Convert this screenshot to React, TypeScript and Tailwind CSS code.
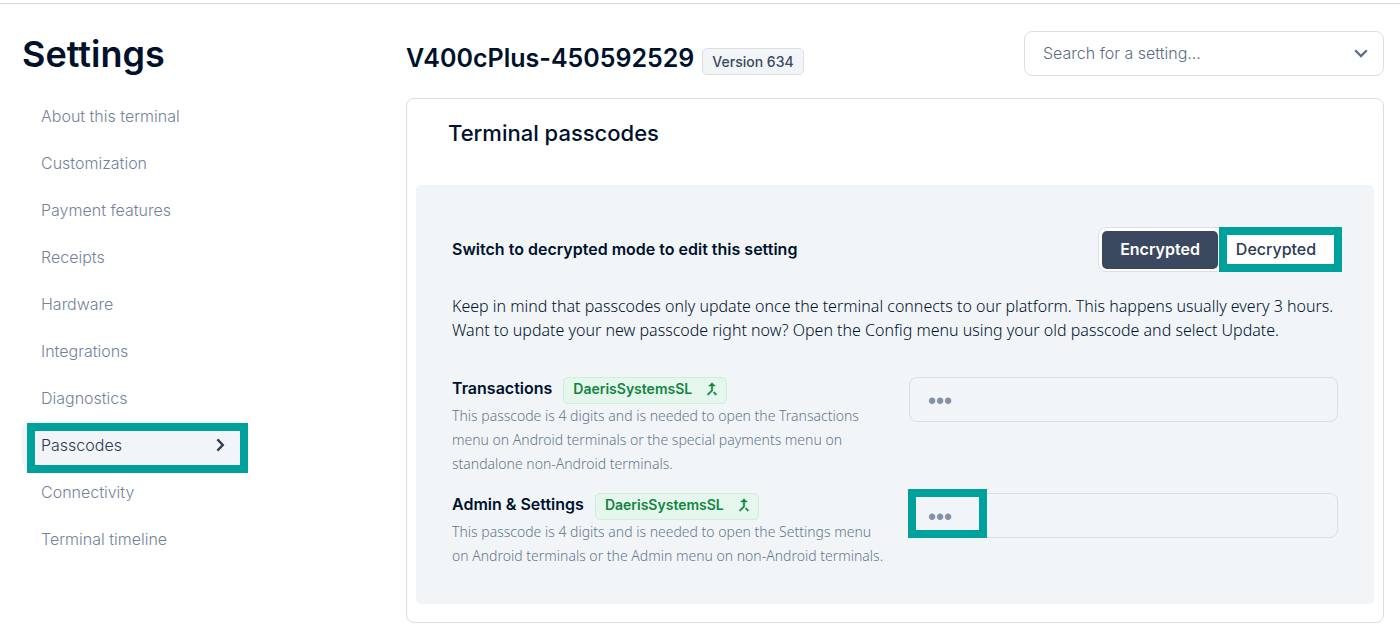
import React from "react";

const NAV_ITEMS = [
  "About this terminal",
  "Customization",
  "Payment features",
  "Receipts",
  "Hardware",
  "Integrations",
  "Diagnostics",
  "Passcodes",
  "Connectivity",
  "Terminal timeline",
];

const ACTIVE_ITEM = "Passcodes";

function Highlight({ className }: { className: string }) {
  return (
    <span
      aria-hidden="true"
      className={`pointer-events-none absolute border-8 border-[#00a19c] ${className}`}
    />
  );
}

function Chevron({ className, d }: { className: string; d: string }) {
  return (
    <svg
      aria-hidden="true"
      viewBox="0 0 16 16"
      className={className}
      fill="none"
      stroke="currentColor"
      strokeWidth="2.3"
    >
      <path d={d} />
    </svg>
  );
}

function MergeIcon() {
  return (
    <svg
      aria-hidden="true"
      viewBox="0 0 24 24"
      className="size-[18px]"
      fill="currentColor"
      stroke="currentColor"
      strokeWidth="0.6"
    >
      <path d="M17 20.41 18.41 19 15 15.59 13.59 17 17 20.41zM7.5 8H11v5.59L5.59 19 7 20.41l6-6V8h3.5L12 3.5 7.5 8z" />
    </svg>
  );
}

function Sidebar() {
  return (
    <aside className="w-[406px] shrink-0 pl-[22px] pt-[26px]">
      <h1 className="text-[36px] font-semibold leading-[48px]">Settings</h1>
      <nav aria-label="Settings" className="mt-[14px] w-[222px]">
        <ul>
          {NAV_ITEMS.map((item) => {
            const active = item === ACTIVE_ITEM;
            return (
              <li key={item} className="relative">
                <a
                  href="#"
                  aria-current={active ? "page" : undefined}
                  className={`flex h-[47px] items-center justify-between rounded-lg pl-[19px] pr-4 text-base font-light ${
                    active ? "bg-[#f1f5f8] text-[#2c3a54]" : "text-[#75839a]"
                  }`}
                >
                  {item}
                  {active && (
                    <Chevron className="size-4" d="M5.4 2.4 10.8 8l-5.4 5.6" />
                  )}
                </a>
                {active && (
                  <Highlight className="-right-1 left-[5px] top-0.5 h-[50px]" />
                )}
              </li>
            );
          })}
        </ul>
      </nav>
    </aside>
  );
}

function PasscodeRow({
  id,
  label,
  description,
  highlighted = false,
}: {
  id: string;
  label: string;
  description: string;
  highlighted?: boolean;
}) {
  return (
    <>
      <div>
        <div className="flex h-[27px] items-center gap-[11px]">
          <label htmlFor={id} className="pb-1.5 text-base font-semibold leading-6">
            {label}
          </label>
          <span className="flex h-[27px] items-center gap-[11px] rounded-[5px] border border-[#cdeedb] bg-[#e5f7ec] pb-[3px] pl-[9px] pr-[5px] text-sm font-semibold text-[#128442]">
            DaerisSystemsSL
            <MergeIcon />
          </span>
        </div>
        <p className="-mr-1.5 font-['Noto_Sans',sans-serif] text-sm font-light leading-6 text-[#66758c]">
          {description}
        </p>
      </div>
      <div className="relative h-[45px]">
        <input
          id={id}
          type="text"
          readOnly
          defaultValue="•••"
          className="h-full w-full rounded-lg border border-[#d9dee4] bg-transparent px-[18px] pt-1 font-['Liberation_Sans',sans-serif] text-[23px] leading-6 text-[#8390a5] outline-none"
        />
        {highlighted && (
          <Highlight className="-left-px -top-1 h-[49px] w-[79px]" />
        )}
      </div>
    </>
  );
}

export default function App() {
  return (
    <div className="bg-white font-['Inter','Liberation_Sans',sans-serif] text-[#00112c]">
      <div className="h-1 border-b border-[#d0d7df]" />
      <div className="flex">
        <Sidebar />
        <main className="min-w-0 flex-1 pb-[10px] pr-4 pt-[27px]">
          <header className="flex items-start justify-between">
            <div className="flex items-center gap-2 pt-[9px]">
              <h2 className="text-[25px] font-semibold leading-9">
                V400cPlus-450592529
              </h2>
              <span className="mt-[7px] flex h-[27px] items-center rounded-[5px] border border-[#dbdee2] bg-[#f1f5f8] px-[9px] text-sm font-medium text-[#3a4860]">
                Version 634
              </span>
            </div>
            <div className="relative w-[360px]">
              <select
                aria-label="Search for a setting"
                className="block h-[45px] w-full appearance-none rounded-lg border border-[#dbdee6] bg-white px-[18px] pb-0.5 text-base font-light text-[#5d6c84] outline-none"
              >
                <option>Search for a setting...</option>
              </select>
              <Chevron
                className="pointer-events-none absolute right-[15px] top-[14px] size-4 text-[#5d6f88]"
                d="M2.2 5.2 8 11l5.8-5.8"
              />
            </div>
          </header>

          <section className="mt-[22px] rounded-lg border border-[#dbdee6] px-[9px] pb-[18px]">
            <h3 className="px-8 pb-[38px] pt-5 text-[22px] font-medium leading-7">
              Terminal passcodes
            </h3>
            <div className="rounded-[5px] bg-[#f1f5f8] px-9 pb-9 pt-[42px]">
              <div className="flex items-center justify-between">
                <h4 className="pb-0.5 text-base font-semibold">
                  Switch to decrypted mode to edit this setting
                </h4>
                <div className="relative flex h-[45px] w-[240px] items-center rounded-lg border border-[#dbdee2] bg-white p-[3px]">
                  <button
                    type="button"
                    aria-pressed="true"
                    className="h-[38px] w-[116px] rounded-[5px] bg-[#3a4860] pb-0.5 text-base font-semibold text-white"
                  >
                    Encrypted
                  </button>
                  <button
                    type="button"
                    aria-pressed="false"
                    className="h-[38px] flex-1 rounded-[5px] pb-0.5 text-base font-medium text-[#2c3a54]"
                  >
                    Decrypted
                  </button>
                  <Highlight className="-right-[5px] -top-px h-[45px] w-[123px]" />
                </div>
              </div>

              <p className="mt-[22px] font-['Noto_Sans',sans-serif] text-base font-light leading-6">
                Keep in mind that passcodes only update once the terminal
                connects to our platform. This happens usually every 3 hours.
                Want to update your new passcode right now? Open the Config menu
                using your old passcode and select Update.
              </p>

              <div className="mt-[35px] grid grid-cols-2 gap-x-7 gap-y-[17px]">
                <PasscodeRow
                  id="transactions-passcode"
                  label="Transactions"
                  description="This passcode is 4 digits and is needed to open the Transactions menu on Android terminals or the special payments menu on standalone non-Android terminals."
                />
                <PasscodeRow
                  id="admin-passcode"
                  label="Admin & Settings"
                  description="This passcode is 4 digits and is needed to open the Settings menu on Android terminals or the Admin menu on non-Android terminals."
                  highlighted
                />
              </div>
            </div>
          </section>
        </main>
      </div>
    </div>
  );
}
